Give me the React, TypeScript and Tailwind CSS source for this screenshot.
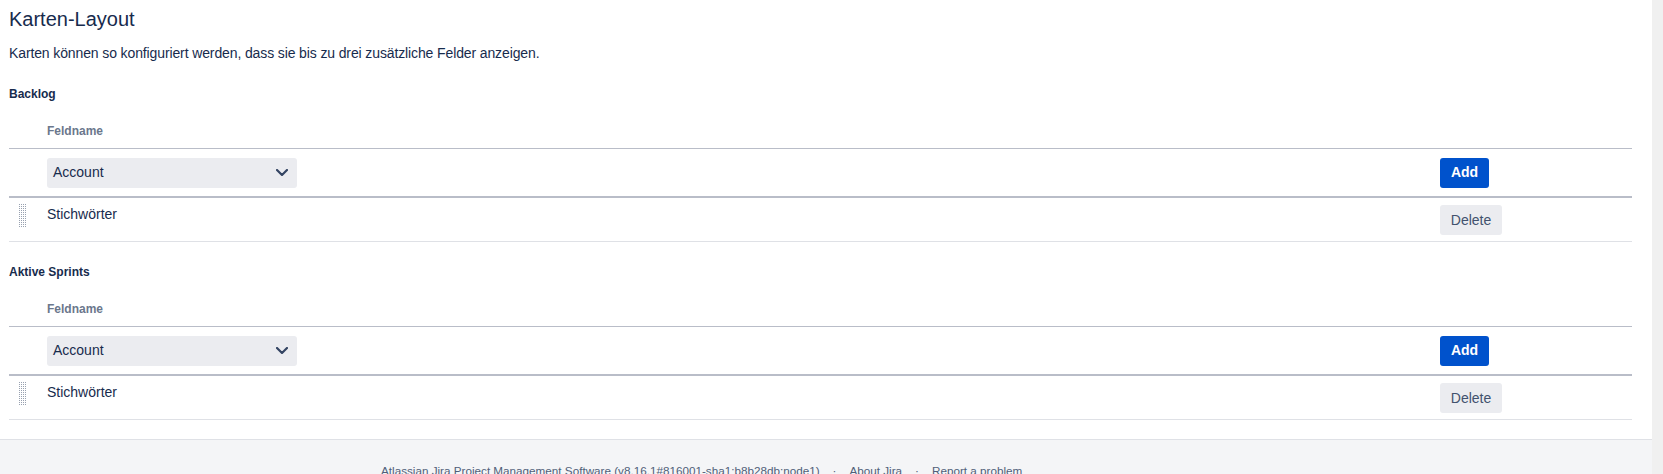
import React from "react";

const FONT = { fontFamily: '"Liberation Sans", Arial, sans-serif' };

/* Griff zum Verschieben einer Zeile — kleines Punktraster */
function DragHandle() {
  const dots: JSX.Element[] = [];
  for (let y = 0; y < 24; y += 2) {
    for (let x = 0; x < 8; x += 2) {
      dots.push(<rect key={`${x}-${y}`} x={x} y={y} width="1" height="1" fill="#98a1b0" />);
    }
  }
  return (
    <svg width="8" height="23" viewBox="0 0 8 23" className="block">
      {dots}
    </svg>
  );
}

function Chevron() {
  return (
    <svg width="12" height="7" viewBox="0 0 12 7" className="block">
      <path d="M1 1 L6 6 L11 1" fill="none" stroke="#344563" strokeWidth="2.2" strokeLinecap="round" strokeLinejoin="round" />
    </svg>
  );
}

function CardSection({ title, first }: { title: string; first?: boolean }) {
  return (
    <div className={first ? "mt-[23px]" : "mt-[22px]"}>
      <div className="text-[12px] leading-[16px] font-bold text-[#172b4d]">{title}</div>

      {/* Tabellenkopf */}
      <div className="mt-[12px] h-[35px] grid grid-cols-[38px_1fr_192px] items-center border-b border-[#b9bdc8]">
        <div />
        <div className="text-[12px] font-bold text-[#6b778c]">Feldname</div>
        <div />
      </div>

      {/* Neues Feld hinzufügen */}
      <div className="h-[49px] grid grid-cols-[38px_1fr_192px] items-center border-b-2 border-[#b9bdc8]">
        <div />
        <div>
          <div className="w-[250px] h-[30px] rounded-[3px] bg-[#ebecf0] flex items-center justify-between pl-[6px] pr-[9px]">
            <span className="text-[14px] text-[#172b4d]">Account</span>
            <Chevron />
          </div>
        </div>
        <div>
          <button className="w-[49px] h-[30px] rounded-[3px] bg-[#0052cc] text-white text-[14px] font-bold">Add</button>
        </div>
      </div>

      {/* Konfigurierte Felder */}
      <div className="h-[44px] grid grid-cols-[38px_1fr_192px] items-start border-b border-[#dfe1e6]">
        <div className="pt-[6px] pl-[10px]">
          <DragHandle />
        </div>
        <div className="pt-[6px] text-[14px] leading-[20px] text-[#172b4d]">Stichwörter</div>
        <div className="pt-[7px]">
          <button className="w-[62px] h-[30px] rounded-[3px] bg-[#ebecf0] text-[#42526e] text-[14px]">Delete</button>
        </div>
      </div>
    </div>
  );
}

export default function App() {
  return (
    <div className="flex w-full h-[474px] overflow-hidden bg-white" style={FONT}>
      <div className="flex-1 flex flex-col">
        <main className="pl-[9px] pr-[20px] pb-[19px]">
          <h1 className="pt-[5px] text-[20px] leading-[28px] font-normal text-[#172b4d]">Karten-Layout</h1>
          <p className="mt-[10px] text-[14px] leading-[20px] tracking-[-0.12px] text-[#172b4d]">
            Karten können so konfiguriert werden, dass sie bis zu drei zusätzliche Felder anzeigen.
          </p>
          <CardSection title="Backlog" first />
          <CardSection title="Aktive Sprints" />
        </main>
        <footer className="flex-1 border-t border-[#dfe1e6] bg-[#f4f5f7] pt-[23px] pl-[381px]">
          <div className="flex items-center gap-[13px] text-[11.7px] leading-[16px] text-[#505f79] whitespace-nowrap">
            <span>Atlassian Jira Project Management Software (v8.16.1#816001-sha1:b8b28db:node1)</span>
            <span>·</span>
            <span>About Jira</span>
            <span>·</span>
            <span>Report a problem</span>
          </div>
        </footer>
      </div>
      <div className="w-[11px] bg-[#f0f0f0]" />
    </div>
  );
}
